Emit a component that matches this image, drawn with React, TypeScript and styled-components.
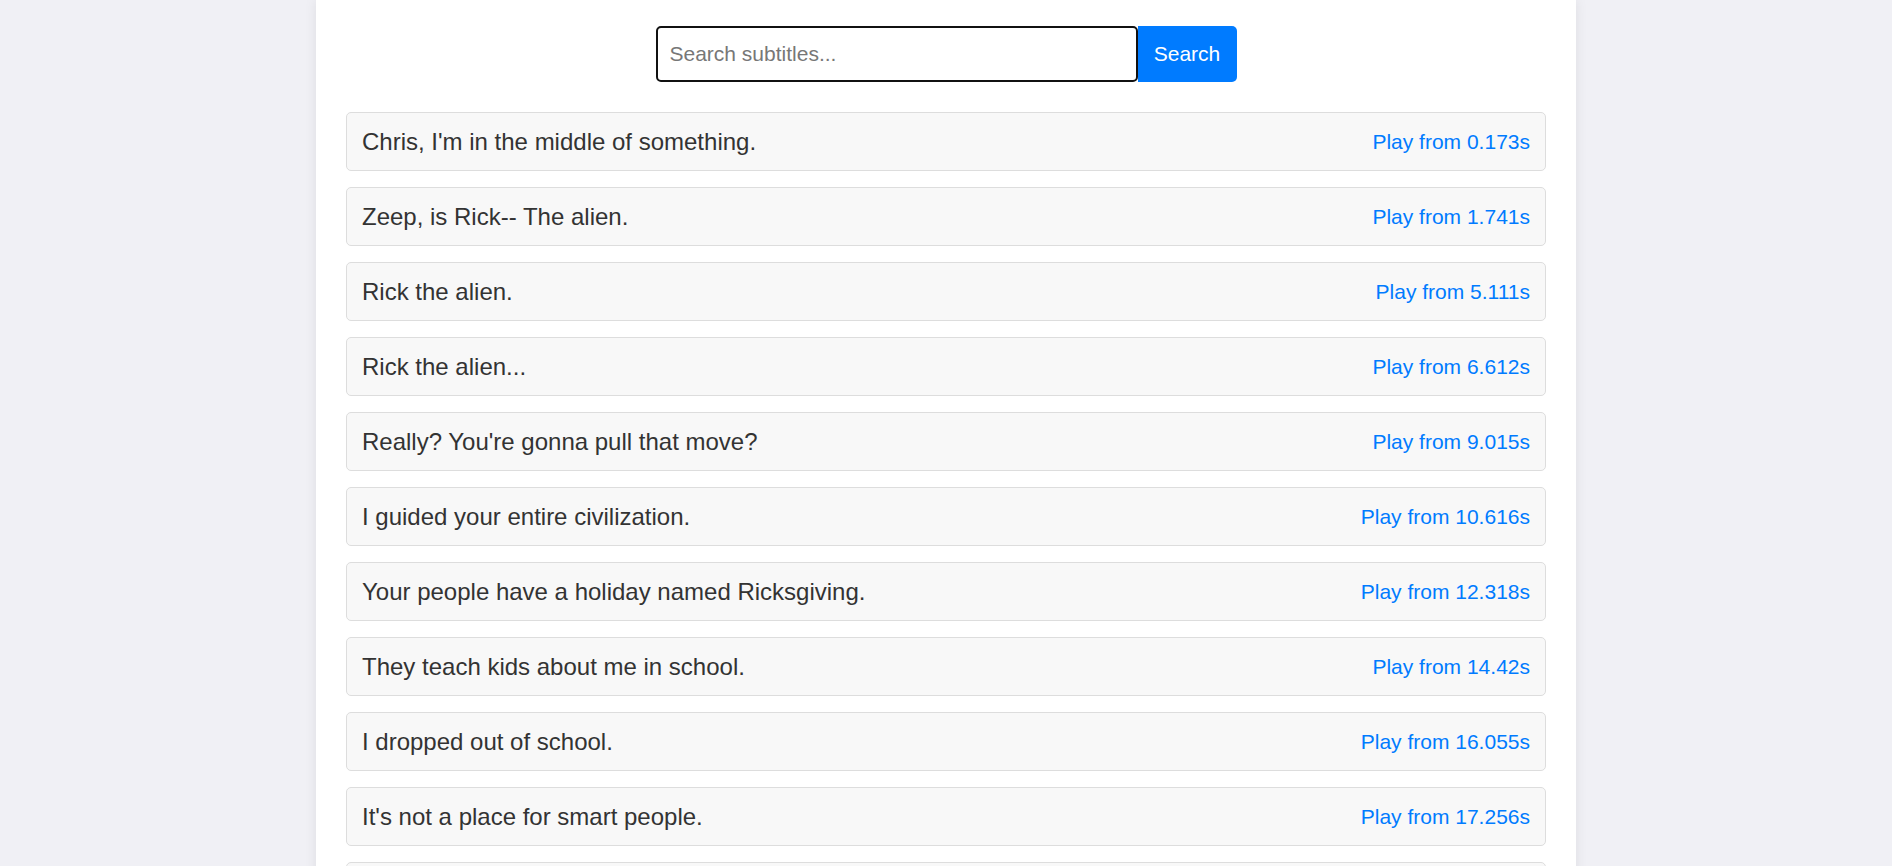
import React from "react";
import styled, { createGlobalStyle } from "styled-components";

const GlobalStyle = createGlobalStyle`
  html, body {
    margin: 0;
    padding: 0;
    background: #f0f0f5;
    font-family: "Liberation Sans", Arial, sans-serif;
  }
`;

const Page = styled.div`
  max-width: 1200px;
  margin: 0 auto;
  padding: 26px 30px 20px;
  background: #ffffff;
  box-shadow: 0 0 12px rgba(0, 0, 0, 0.08);
  min-height: 866px;
`;

const SearchBar = styled.form`
  display: flex;
  justify-content: center;
  margin-bottom: 30px;
`;

const SearchInput = styled.input`
  width: 482px;
  height: 56px;
  box-sizing: border-box;
  padding: 0 12px;
  font-size: 21px;
  font-family: inherit;
  color: #333;
  border: 2px solid #111;
  border-radius: 5px;
  outline: none;
  &::placeholder {
    color: #777;
  }
`;

const SearchButton = styled.button`
  width: 99px;
  height: 56px;
  border: none;
  background: #007bff;
  color: #fff;
  font-size: 21px;
  font-family: inherit;
  border-radius: 0 5px 5px 0;
  cursor: pointer;
`;

const List = styled.ul`
  list-style: none;
  margin: 0;
  padding: 0;
  display: flex;
  flex-direction: column;
  gap: 16px;
`;

const Row = styled.li`
  display: flex;
  align-items: center;
  justify-content: space-between;
  height: 59px;
  box-sizing: border-box;
  padding: 0 15px;
  background: #f8f8f8;
  border: 1px solid #ddd;
  border-radius: 5px;
`;

const Line = styled.span`
  font-size: 24px;
  color: #333;
`;

const PlayButton = styled.button`
  border: none;
  background: none;
  padding: 0;
  color: #007bff;
  font-size: 21px;
  font-family: inherit;
  cursor: pointer;
`;

const subtitles: [string, string][] = [
  ["Chris, I'm in the middle of something.", "0.173"],
  ["Zeep, is Rick-- The alien.", "1.741"],
  ["Rick the alien.", "5.111"],
  ["Rick the alien...", "6.612"],
  ["Really? You're gonna pull that move?", "9.015"],
  ["I guided your entire civilization.", "10.616"],
  ["Your people have a holiday named Ricksgiving.", "12.318"],
  ["They teach kids about me in school.", "14.42"],
  ["I dropped out of school.", "16.055"],
  ["It's not a place for smart people.", "17.256"],
  ["You know what, Zeep?", "19.1"],
];

export default function App() {
  return (
    <>
      <GlobalStyle />
      <Page>
        <SearchBar onSubmit={(e) => e.preventDefault()}>
          <SearchInput placeholder="Search subtitles..." />
          <SearchButton type="submit">Search</SearchButton>
        </SearchBar>
        <List>
          {subtitles.map(([text, t]) => (
            <Row key={t}>
              <Line>{text}</Line>
              <PlayButton>Play from {t}s</PlayButton>
            </Row>
          ))}
        </List>
      </Page>
    </>
  );
}
